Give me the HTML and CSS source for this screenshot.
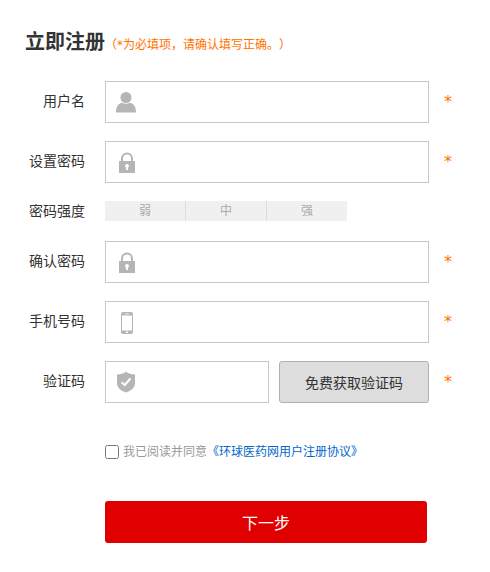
FILE: index.html
```html
<!DOCTYPE html>
<html lang="zh-CN">
<head>
    <meta charset="UTF-8">
    <meta name="viewport" content="width=device-width, initial-scale=1.0">
    <title>立即注册</title>
    <link rel="stylesheet" href="styles.css">
</head>
<body>
    <form class="register">
        <!-- Title -->
        <div class="title">
            <h1>立即注册</h1>
            <span class="note">（<span class="note-star">*</span>为必填项，请确认填写正确。）</span>
        </div>

        <!-- Fields -->
        <div class="row">
            <label class="label" for="username">用户名</label>
            <div class="field">
                <svg class="icon" viewBox="0 0 22 24"><circle cx="10" cy="6.500" r="5.500"/><path d="M0 21.500c0-5 1.500-8.700 6-9.800 2.500 1.500 5.500 1.500 8 0 4.500 1.100 6 4.800 6 9.800z"/></svg>
                <input type="text" id="username">
            </div>
            <span class="star">*</span>
        </div>
        <div class="row">
            <label class="label" for="password">设置密码</label>
            <div class="field">
                <svg class="icon" viewBox="0 0 22 24"><path class="shackle" d="M6 12V7.500a5 5 0 0 1 10 0V12"/><path fill-rule="evenodd" d="M3 10h16v12H3zM11 13a2 2 0 0 0-2 2c0 .7.500 1.200 1 1.500v2.500h2v-2.500c.5-.3 1-.8 1-1.500a2 2 0 0 0-2-2z"/></svg>
                <input type="password" id="password">
            </div>
            <span class="star">*</span>
        </div>
        <div class="row row-strength">
            <span class="label">密码强度</span>
            <div class="strength">
                <span>弱</span>
                <span>中</span>
                <span>强</span>
            </div>
        </div>
        <div class="row">
            <label class="label" for="confirm">确认密码</label>
            <div class="field">
                <svg class="icon" viewBox="0 0 22 24"><path class="shackle" d="M6 12V7.500a5 5 0 0 1 10 0V12"/><path fill-rule="evenodd" d="M3 10h16v12H3zM11 13a2 2 0 0 0-2 2c0 .7.500 1.200 1 1.500v2.500h2v-2.500c.5-.3 1-.8 1-1.500a2 2 0 0 0-2-2z"/></svg>
                <input type="password" id="confirm">
            </div>
            <span class="star">*</span>
        </div>
        <div class="row">
            <label class="label" for="phone">手机号码</label>
            <div class="field">
                <svg class="icon" viewBox="0 0 22 24"><path fill-rule="evenodd" d="M7 1h8a2 2 0 0 1 2 2v18a2 2 0 0 1-2 2H7a2 2 0 0 1-2-2V3a2 2 0 0 1 2-2zM6 4.500v15h10v-15zM9 2.500v.8h4v-.8zM10 20.500V22h2v-1.500z"/></svg>
                <input type="text" id="phone">
            </div>
            <span class="star">*</span>
        </div>
        <div class="row">
            <label class="label" for="code">验证码</label>
            <div class="field field-code">
                <svg class="icon" viewBox="0 0 22 24"><path d="M10 .8c2.500 1.800 5.500 2.600 9 2.600V12c0 4.800-4 7.800-9 9.500C5 19.800 1 16.800 1 12V3.400C4.500 3.400 7.500 2.600 10 .8z"/><path class="tick" d="M5.500 11.300l3.200 2.700 5.800-6.500"/></svg>
                <input type="text" id="code">
            </div>
            <button type="button" class="code-btn">免费获取验证码</button>
            <span class="star">*</span>
        </div>

        <!-- Agreement -->
        <div class="agree">
            <input type="checkbox" id="agree">
            <label for="agree">我已阅读并同意</label><a href="#">《环球医药网用户注册协议》</a>
        </div>

        <button type="submit" class="submit">下一步</button>
    </form>
</body>
</html>
```

FILE: styles.css
```css
* { margin: 0; padding: 0; box-sizing: border-box; }
body { background: #fff; color: #333; font-family: "Liberation Sans", "Noto Sans CJK SC", sans-serif; font-size: 14px; text-spacing-trim: space-all; }
.register { width: 490px; padding-top: 27px; }

/* Title */
.title { display: flex; height: 30px; margin-bottom: 24px; padding-left: 25px; line-height: 30px; }
.title h1 { width: 80px; font-size: 20px; font-weight: bold; }
.note { padding-top: 2px; color: #ff7200; font-family: "Noto Sans CJK SC", sans-serif; font-size: 12px; font-kerning: none; white-space: nowrap; }
.note-star { display: inline-block; width: 6px; font-family: "DejaVu Sans", sans-serif; line-height: 12px; vertical-align: 0; }

/* Rows */
.row { display: flex; align-items: center; height: 42px; margin-bottom: 18px; }
.label { width: 85px; margin-right: 20px; padding-bottom: 2px; text-align: right; line-height: 20px; }
.field { display: flex; align-items: center; width: 324px; height: 42px; padding-left: 10px; border: 1px solid #c8c8c8; }
.field input { flex: 1; min-width: 0; height: 40px; padding-left: 8px; border: 0; outline: none; font-size: 14px; }
.field-code { width: 164px; margin-right: 10px; }
.star { width: 8px; margin-left: 15px; padding-bottom: 1px; color: #ff7200; font-family: "DejaVu Sans", sans-serif; font-size: 16px; line-height: 20px; }

/* Icons */
.icon { width: 22px; height: 24px; margin-top: 2px; fill: #b5b5b5; }
.shackle { fill: none; stroke: #b5b5b5; stroke-width: 2; }
.tick { fill: none; stroke: #fff; stroke-width: 2; }

/* Password strength */
.row-strength { height: 20px; margin-bottom: 20px; }
.row-strength .label { padding-bottom: 0; }
.strength { display: flex; width: 242px; height: 20px; background: #f0f0f0; }
.strength span { flex: 1; color: #aaa; font-size: 12px; line-height: 20px; text-align: center; }
.strength span + span { border-left: 1px solid #dcdcdc; }

/* Buttons */
.code-btn { width: 150px; height: 42px; border: 1px solid #b0b0b0; border-radius: 3px; background: #ddd; color: #333; font-family: inherit; font-size: 14px; }
.submit { display: block; width: 322px; height: 42px; margin-left: 105px; padding-bottom: 1px; border: 0; border-radius: 3px; background: #e10000; color: #fff; font-family: inherit; font-size: 16px; }

/* Agreement */
.agree { display: flex; align-items: center; height: 20px; margin: 39px 0 39px 105px; color: #999; font-size: 12px; font-kerning: none; line-height: 20px; }
.agree input { width: 14px; height: 14px; margin-right: 4px; }
.agree a { color: #06c; text-decoration: none; }
```
